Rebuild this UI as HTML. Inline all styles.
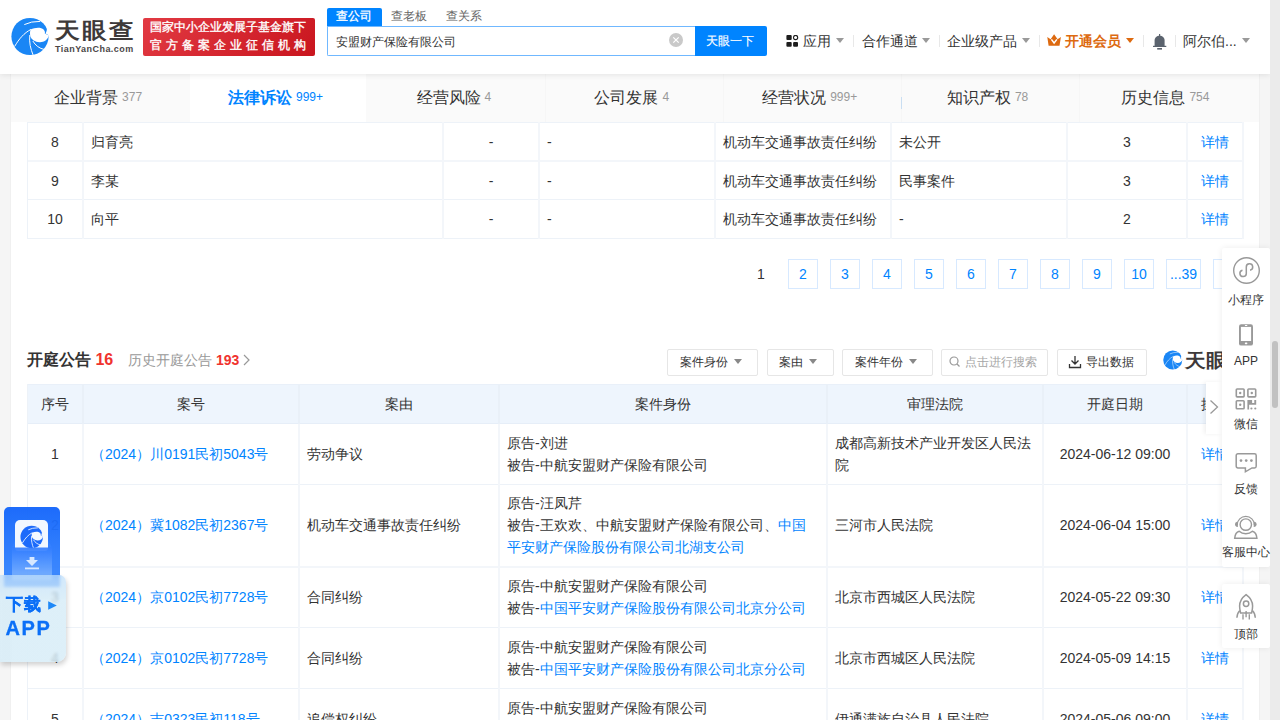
<!DOCTYPE html>
<html><head><meta charset="utf-8"><style>
*{box-sizing:border-box;margin:0;padding:0}
html,body{width:1280px;height:720px;overflow:hidden}
body{position:relative;background:#f5f5f5;font-family:"Liberation Sans",sans-serif;color:#333;font-size:14px}
.abs{position:absolute}
.t{position:absolute;white-space:nowrap;line-height:1}
#header{position:absolute;left:0;top:0;width:1270px;height:74px;background:#fff;box-shadow:0 1px 6px rgba(0,0,0,.09);z-index:5}
#scroll{position:absolute;left:1270px;top:0;width:10px;height:720px;background:#ebebeb;z-index:9}
#thumb{position:absolute;left:2px;top:341px;width:6px;height:67px;border-radius:3px;background:#c1c1c1}
#main{position:absolute;left:10px;top:74px;width:1250px;height:646px;background:#fff;border-left:1px solid #f0f0f0;border-right:1px solid #f0f0f0}
#tabs{position:absolute;left:11px;top:74px;width:1248px;height:48px;background:#fafafa;z-index:4}
.tab{position:absolute;top:0;height:48px;width:178.3px;text-align:center;font-size:16px;line-height:48px;color:#333;white-space:nowrap}
.tab small{font-size:12px;color:#999;margin-left:4px;position:relative;top:-2px}
.tab.on{background:#fff;color:#0084ff;font-weight:bold}
.tab.on small{color:#0084ff;font-weight:normal}
.hl{position:absolute;height:1px;background:#edf2f8}
.vl{position:absolute;width:1px;background:#edf2f8}
.c{position:absolute;text-align:center;white-space:nowrap;line-height:22px;font-size:14px;color:#333}
.l{position:absolute;white-space:nowrap;line-height:22px;font-size:14px;color:#333}
.blue{color:#0084ff !important}
.pg{position:absolute;top:258.5px;width:30px;height:30px;border:1px solid #d7e9ff;text-align:center;line-height:28px;color:#0084ff;font-size:14px}
.btn{position:absolute;top:348.5px;height:27.5px;border:1px solid #e6e6e6;border-radius:2px;background:#fff}
.tri{position:absolute;width:0;height:0;border-left:4px solid transparent;border-right:4px solid transparent;border-top:5px solid #999}
.side{position:absolute;left:1222px;width:48px;background:#fff;box-shadow:0 0 6px rgba(0,0,0,.08);z-index:8}
.si{position:absolute;left:1222px;width:48px;text-align:center;font-size:12px;color:#333;line-height:12px;white-space:nowrap}
</style></head><body>
<svg width="0" height="0" style="position:absolute"><defs><g id="lg">
<circle cx="21" cy="21.5" r="18.6" fill="#1a86f5"/>
<path d="M15.3 9.6Q22 6.2 31.2 6.4" fill="none" stroke="#fff" stroke-width="1"/>
<path d="M21.6 14.6C26 12.2 32 11.8 34.6 14.6C36 16.2 36.2 17.4 35.8 18.6L40 20.6C38.5 25 35 27.4 30.5 27.2C26 27 22.5 24.5 21.4 21.5C20.8 19 20.9 16.5 21.6 14.6Z" fill="#fff"/>
<path d="M37.5 11.5C38.5 13.5 37.5 17 36.5 18.6L41 21L41 10Z" fill="#fff"/>
<path d="M5.6 31.5C10 24 15 18 22 14.4" fill="none" stroke="#fff" stroke-width="1"/>
<path d="M20.8 20C20 27 21.5 34 24.3 40.5" fill="none" stroke="#fff" stroke-width="1"/>
<path d="M23.8 26C26.5 30.5 30.5 33.5 35.3 34.5" fill="none" stroke="#fff" stroke-width="1"/>
</g></defs></svg>
<svg width="0" height="0" style="position:absolute"><defs><g id="lg2">
<circle cx="21" cy="21.5" r="18.6" fill="#1466fb"/>
<path d="M15.3 9.6Q22 6.2 31.2 6.4" fill="none" stroke="#f2f8ff" stroke-width="1.4"/>
<path d="M21.6 14.6C26 12.2 32 11.8 34.6 14.6C36 16.2 36.2 17.4 35.8 18.6L40 20.6C38.5 25 35 27.4 30.5 27.2C26 27 22.5 24.5 21.4 21.5C20.8 19 20.9 16.5 21.6 14.6Z" fill="#f2f8ff"/>
<path d="M37.5 11.5C38.5 13.5 37.5 17 36.5 18.6L41 21L41 10Z" fill="#f2f8ff"/>
<path d="M5.6 31.5C10 24 15 18 22 14.4" fill="none" stroke="#f2f8ff" stroke-width="1.4"/>
<path d="M20.8 20C20 27 21.5 34 24.3 40.5" fill="none" stroke="#f2f8ff" stroke-width="1.4"/>
<path d="M23.8 26C26.5 30.5 30.5 33.5 35.3 34.5" fill="none" stroke="#f2f8ff" stroke-width="1.4"/>
</g></defs></svg>

<div id="header">
  <svg class="abs" style="left:9px;top:15px" width="43" height="43" viewBox="0 0 43 43"><use href="#lg"/></svg>
  <div class="t" style="left:55px;top:20px;font-size:22px;font-weight:bold;color:#3d3939;letter-spacing:2px;transform:scaleX(1.12);transform-origin:0 0">天眼查</div>
  <div class="t" style="left:55px;top:45px;font-size:9px;font-weight:bold;color:#4a4646;letter-spacing:0.45px">TianYanCha.com</div>
  <div class="abs" style="left:143px;top:18px;width:172px;height:38px;border-radius:2px;background:linear-gradient(135deg,#e23a43,#c9151e)"></div>
  <div class="t" style="left:150px;top:21px;font-size:12px;color:#fff;-webkit-text-stroke:0.35px #fff">国家中小企业发展子基金旗下</div>
  <div class="t" style="left:150px;top:39px;font-size:12px;color:#fff;letter-spacing:4px;-webkit-text-stroke:0.35px #fff">官方备案企业征信机构</div>

  <div class="abs" style="left:327px;top:8px;width:55px;height:18px;background:#0084ff;border-radius:2px 2px 0 0"></div>
  <div class="t" style="left:336px;top:10px;font-size:12px;color:#fff;-webkit-text-stroke:0.3px #fff">查公司</div>
  <div class="t" style="left:391px;top:10px;font-size:12px;color:#666">查老板</div>
  <div class="t" style="left:446px;top:10px;font-size:12px;color:#666">查关系</div>
  <div class="abs" style="left:327px;top:26px;width:369px;height:30px;border:1px solid #70b8ff;border-right:none;border-radius:0 0 0 2px;background:#fff"></div>
  <div class="t" style="left:336px;top:36px;font-size:12px;color:#333">安盟财产保险有限公司</div>
  
  <div class="abs" style="left:695px;top:26px;width:72px;height:30px;background:#0084ff;border-radius:0 2px 2px 0"></div>
  <div class="t" style="left:706px;top:34.5px;font-size:12px;color:#fff;-webkit-text-stroke:0.15px #fff">天眼一下</div>

  <div class="t" style="left:803px;top:34px;font-size:14px;color:#333">应用</div>
  <div class="tri" style="left:836px;top:38px"></div>
  <div class="abs" style="left:853px;top:35px;width:1px;height:12px;background:#e8e8e8"></div>
  <div class="t" style="left:862px;top:34px;font-size:14px;color:#333">合作通道</div>
  <div class="tri" style="left:922px;top:38px"></div>
  <div class="abs" style="left:939px;top:35px;width:1px;height:12px;background:#e8e8e8"></div>
  <div class="t" style="left:947px;top:34px;font-size:14px;color:#333">企业级产品</div>
  <div class="tri" style="left:1022px;top:38px"></div>
  <div class="abs" style="left:1039px;top:35px;width:1px;height:12px;background:#e8e8e8"></div>
  <div class="t" style="left:1065px;top:34px;font-size:14px;color:#dd6a10;font-weight:bold">开通会员</div>
  <div class="tri" style="left:1126px;top:38px;border-top-color:#dd6a10"></div>
  <div class="abs" style="left:1143px;top:35px;width:1px;height:12px;background:#e8e8e8"></div>
  <div class="abs" style="left:1175px;top:35px;width:1px;height:12px;background:#e8e8e8"></div>
  <div class="t" style="left:1183px;top:34px;font-size:14px;color:#333">阿尔伯...</div>
  <div class="tri" style="left:1242px;top:38px"></div>
 
  <svg class="abs" style="left:786px;top:35px" width="13" height="12" viewBox="0 0 13 12">
    <rect x="0.4" y="0" width="5.3" height="4.9" rx="1" fill="#1e1e1e"/>
    <circle cx="9.6" cy="2.5" r="2.1" fill="none" stroke="#1e1e1e" stroke-width="1.1"/>
    <rect x="0.4" y="6.9" width="5.3" height="4.9" rx="1" fill="#1e1e1e"/>
    <rect x="7.1" y="6.9" width="4.9" height="4.9" rx="1" fill="#1e1e1e"/>
  </svg>
  <svg class="abs" style="left:1047px;top:34px" width="14" height="12" viewBox="0 0 14 12">
    <path d="M0.3 3L3.6 5.2L7.1 0.2L10.6 5.2L13.9 3L12.5 11.8H1.6Z" fill="#dd6a10"/>
    <path d="M4.4 5.4L7.1 9L9.9 5.4" fill="none" stroke="#fff" stroke-width="1.5"/>
  </svg>
  <svg class="abs" style="left:1153px;top:34px" width="14" height="16" viewBox="0 0 14 16">
    <path d="M6.6 0v2.4" stroke="#5b636e" stroke-width="1.2"/>
    <path d="M1.6 12V6.5C1.6 3.6 3.8 1.8 6.6 1.8C9.4 1.8 11.6 3.6 11.6 6.5V12Z" fill="#5b636e"/>
    <rect x="0" y="11.8" width="13.3" height="1.2" fill="#5b636e"/>
    <rect x="4.2" y="14" width="4.8" height="1.6" fill="#5b636e"/>
  </svg>
  <svg class="abs" style="left:669px;top:33px" width="14" height="14" viewBox="0 0 14 14">
    <circle cx="7" cy="7" r="7" fill="#c9c9c9"/>
    <path d="M4.3 4.3l5.4 5.4M9.7 4.3l-5.4 5.4" stroke="#fff" stroke-width="1.2"/>
  </svg>
</div>

<div id="scroll"><div id="thumb"></div></div>
<div id="main"></div>
<div id="tabs">
  <div class="tab" style="left:0.0px;padding-right:4.2px">企业背景<small>377</small></div>
  <div class="tab on" style="left:179px;width:176px;padding-right:5.0px">法律诉讼<small>999+</small></div>
  <div class="tab" style="left:356.6px;padding-right:5.8px">经营风险<small>4</small></div>
  <div class="tab" style="left:534.9px;padding-right:6.6px">公司发展<small>4</small></div>
  <div class="tab" style="left:713.2px;padding-right:7.4px">经营状况<small>999+</small></div>
  <div class="tab" style="left:891.5px;padding-right:8.2px">知识产权<small>78</small></div>
  <div class="tab" style="left:1069.8px;padding-right:9.0px">历史信息<small>754</small></div>
  <div class="abs" style="left:534px;top:0;width:1px;height:48px;background:#f6f6f6"></div>
  <div class="abs" style="left:711.5px;top:0;width:1px;height:48px;background:#f6f6f6"></div>
  <div class="abs" style="left:890px;top:0;width:1px;height:48px;background:#f6f6f6"></div>
  <div class="abs" style="left:1068px;top:0;width:1px;height:48px;background:#f6f6f6"></div>
  <div class="abs" style="left:890px;top:23px;width:1px;height:11.5px;background:#c9def2"></div>
</div>

<div class="abs" style="top:122px;left:27px;width:1217px;height:1px;background:#edf2f8"></div>
<div class="abs" style="top:160px;left:27px;width:1217px;height:2px;background:#f3f6fa"></div>
<div class="abs" style="top:199px;left:27px;width:1217px;height:1px;background:#edf2f8"></div>
<div class="abs" style="top:238px;left:27px;width:1217px;height:1px;background:#edf2f8"></div>
<div class="abs" style="left:27px;top:122px;width:1px;height:117px;background:#edf2f8"></div>
<div class="abs" style="left:82px;top:122px;width:2px;height:117px;background:#f3f6fa"></div>
<div class="abs" style="left:442px;top:122px;width:2px;height:117px;background:#f3f6fa"></div>
<div class="abs" style="left:538px;top:122px;width:2px;height:117px;background:#f3f6fa"></div>
<div class="abs" style="left:714px;top:122px;width:2px;height:117px;background:#f3f6fa"></div>
<div class="abs" style="left:890px;top:122px;width:2px;height:117px;background:#f3f6fa"></div>
<div class="abs" style="left:1066px;top:122px;width:2px;height:117px;background:#f3f6fa"></div>
<div class="abs" style="left:1186px;top:122px;width:2px;height:117px;background:#f3f6fa"></div>
<div class="abs" style="left:1242px;top:122px;width:2px;height:117px;background:#f3f6fa"></div>
<div class="c" style="left:27px;width:56px;top:131px">8</div>
<div class="l" style="left:91px;top:131px">归育亮</div>
<div class="c" style="left:443px;width:96px;top:131px">-</div>
<div class="l" style="left:547px;top:131px">-</div>
<div class="l" style="left:723px;top:131px">机动车交通事故责任纠纷</div>
<div class="l" style="left:899px;top:131px">未公开</div>
<div class="c" style="left:1067px;width:120px;top:131px">3</div>
<div class="c blue" style="left:1187px;width:56px;top:131px">详情</div>
<div class="c" style="left:27px;width:56px;top:170px">9</div>
<div class="l" style="left:91px;top:170px">李某</div>
<div class="c" style="left:443px;width:96px;top:170px">-</div>
<div class="l" style="left:547px;top:170px">-</div>
<div class="l" style="left:723px;top:170px">机动车交通事故责任纠纷</div>
<div class="l" style="left:899px;top:170px">民事案件</div>
<div class="c" style="left:1067px;width:120px;top:170px">3</div>
<div class="c blue" style="left:1187px;width:56px;top:170px">详情</div>
<div class="c" style="left:27px;width:56px;top:208px">10</div>
<div class="l" style="left:91px;top:208px">向平</div>
<div class="c" style="left:443px;width:96px;top:208px">-</div>
<div class="l" style="left:547px;top:208px">-</div>
<div class="l" style="left:723px;top:208px">机动车交通事故责任纠纷</div>
<div class="l" style="left:899px;top:208px">-</div>
<div class="c" style="left:1067px;width:120px;top:208px">2</div>
<div class="c blue" style="left:1187px;width:56px;top:208px">详情</div>
<div class="c" style="left:746px;width:30px;top:262.5px">1</div>
<div class="pg" style="left:788px">2</div>
<div class="pg" style="left:830px">3</div>
<div class="pg" style="left:872px">4</div>
<div class="pg" style="left:914px">5</div>
<div class="pg" style="left:956px">6</div>
<div class="pg" style="left:998px">7</div>
<div class="pg" style="left:1040px">8</div>
<div class="pg" style="left:1082px">9</div>
<div class="pg" style="left:1124px">10</div>
<div class="pg" style="left:1166px;width:35px">...39</div>
<div class="pg" style="left:1213px">&gt;</div>
<div class="t" style="left:27px;top:352px;font-size:16px;font-weight:bold;color:#333">开庭公告 <span style="color:#f0332e">16</span></div>
<div class="t" style="left:128px;top:353px;font-size:14px;color:#999">历史开庭公告 <span style="color:#f0332e;font-weight:bold">193</span></div>
<svg class="abs" style="left:243px;top:354px" width="7" height="12" viewBox="0 0 7 12"><path d="M1 1l5 5-5 5" fill="none" stroke="#999" stroke-width="1.2"/></svg>
<div class="btn" style="left:667px;width:91px"></div>
<div class="t" style="left:680px;top:356px;font-size:12px;color:#333">案件身份</div>
<div class="tri" style="left:734px;top:359px;border-top-color:#888"></div>
<div class="btn" style="left:767px;width:67px"></div>
<div class="t" style="left:779px;top:356px;font-size:12px;color:#333">案由</div>
<div class="tri" style="left:809px;top:359px;border-top-color:#888"></div>
<div class="btn" style="left:842px;width:91px"></div>
<div class="t" style="left:855px;top:356px;font-size:12px;color:#333">案件年份</div>
<div class="tri" style="left:909px;top:359px;border-top-color:#888"></div>
<div class="btn" style="left:941px;width:107px"></div>
<svg class="abs" style="left:949px;top:356px" width="11" height="11" viewBox="0 0 11 11"><circle cx="5" cy="5" r="4" fill="none" stroke="#999" stroke-width="1.2"/><path d="M8 8l2.5 2.5" stroke="#999" stroke-width="1.2"/></svg>
<div class="t" style="left:965px;top:356px;font-size:12px;color:#a6a6a6">点击进行搜索</div>
<div class="btn" style="left:1056.5px;width:90.5px"></div>
<svg class="abs" style="left:1068px;top:355px" width="14" height="14" viewBox="0 0 14 14"><path d="M7 1v8M3.5 5.5L7 9l3.5-3.5M1.5 9v3.5h11V9" fill="none" stroke="#333" stroke-width="1.3"/></svg>
<div class="t" style="left:1086px;top:356px;font-size:12px;color:#333">导出数据</div>
<svg class="abs" style="left:1162px;top:348.7px" width="22" height="22" viewBox="0 0 43 43"><use href="#lg"/></svg>
<div class="t" style="left:1185px;top:351px;font-size:19px;font-weight:bold;color:#3d3939;transform:scaleX(1.08);transform-origin:0 0">天眼查</div>
<div class="abs" style="left:27px;top:384px;width:1216px;height:40px;background:#eef5fd"></div>
<div class="abs" style="left:27px;top:384px;width:1216px;height:1px;background:#e9f0f9"></div>
<div class="abs" style="left:27px;top:423px;width:1216px;height:1px;background:#e6eef8"></div>
<div class="abs" style="top:484px;left:27px;width:1216px;height:1px;background:#edf2f8"></div>
<div class="abs" style="top:566px;left:27px;width:1216px;height:2px;background:#f3f6fa"></div>
<div class="abs" style="top:627px;left:27px;width:1216px;height:1px;background:#edf2f8"></div>
<div class="abs" style="top:688px;left:27px;width:1216px;height:1px;background:#edf2f8"></div>
<div class="abs" style="left:27px;top:384px;width:1px;height:336px;background:#edf2f8"></div>
<div class="abs" style="left:82px;top:384px;width:2px;height:40px;background:#e9f0f8"></div>
<div class="abs" style="left:82px;top:424px;width:2px;height:296px;background:#f3f6fa"></div>
<div class="abs" style="left:298px;top:384px;width:2px;height:40px;background:#e9f0f8"></div>
<div class="abs" style="left:298px;top:424px;width:2px;height:296px;background:#f3f6fa"></div>
<div class="abs" style="left:498px;top:384px;width:2px;height:40px;background:#e9f0f8"></div>
<div class="abs" style="left:498px;top:424px;width:2px;height:296px;background:#f3f6fa"></div>
<div class="abs" style="left:826px;top:384px;width:2px;height:40px;background:#e9f0f8"></div>
<div class="abs" style="left:826px;top:424px;width:2px;height:296px;background:#f3f6fa"></div>
<div class="abs" style="left:1042px;top:384px;width:2px;height:40px;background:#e9f0f8"></div>
<div class="abs" style="left:1042px;top:424px;width:2px;height:296px;background:#f3f6fa"></div>
<div class="abs" style="left:1186px;top:384px;width:2px;height:40px;background:#e9f0f8"></div>
<div class="abs" style="left:1186px;top:424px;width:2px;height:296px;background:#f3f6fa"></div>
<div class="abs" style="left:1242px;top:384px;width:2px;height:40px;background:#e9f0f8"></div>
<div class="abs" style="left:1242px;top:424px;width:2px;height:296px;background:#f3f6fa"></div>
<div class="c" style="left:27px;width:56px;top:393px">序号</div>
<div class="c" style="left:83px;width:216px;top:393px">案号</div>
<div class="c" style="left:299px;width:200px;top:393px">案由</div>
<div class="c" style="left:499px;width:328px;top:393px">案件身份</div>
<div class="c" style="left:827px;width:216px;top:393px">审理法院</div>
<div class="c" style="left:1043px;width:144px;top:393px">开庭日期</div>
<div class="c" style="left:1187px;width:56px;top:393px">操作</div>
<div class="c" style="left:27px;width:56px;top:443.0px">1</div>
<div class="l blue" style="left:91px;top:443.0px">（2024）川0191民初5043号</div>
<div class="l" style="left:307px;top:443.0px">劳动争议</div>
<div class="l" style="left:507px;top:432.0px">原告-刘进</div>
<div class="l" style="left:507px;top:454.0px">被告-中航安盟财产保险有限公司</div>
<div class="l" style="left:835px;top:432.0px">成都高新技术产业开发区人民法</div>
<div class="l" style="left:835px;top:454.0px">院</div>
<div class="c" style="left:1043px;width:144px;top:443.0px">2024-06-12 09:00</div>
<div class="c blue" style="left:1187px;width:56px;top:443.0px">详情</div>
<div class="c" style="left:27px;width:56px;top:514.0px">2</div>
<div class="l blue" style="left:91px;top:514.0px">（2024）冀1082民初2367号</div>
<div class="l" style="left:307px;top:514.0px">机动车交通事故责任纠纷</div>
<div class="l" style="left:507px;top:492.0px">原告-汪凤芹</div>
<div class="l" style="left:507px;top:514.0px">被告-王欢欢、中航安盟财产保险有限公司、<span class="blue">中国</span></div>
<div class="l" style="left:507px;top:536.0px"><span class="blue">平安财产保险股份有限公司北湖支公司</span></div>
<div class="l" style="left:835px;top:514.0px">三河市人民法院</div>
<div class="c" style="left:1043px;width:144px;top:514.0px">2024-06-04 15:00</div>
<div class="c blue" style="left:1187px;width:56px;top:514.0px">详情</div>
<div class="c" style="left:27px;width:56px;top:585.5px">3</div>
<div class="l blue" style="left:91px;top:585.5px">（2024）京0102民初7728号</div>
<div class="l" style="left:307px;top:585.5px">合同纠纷</div>
<div class="l" style="left:507px;top:574.5px">原告-中航安盟财产保险有限公司</div>
<div class="l" style="left:507px;top:596.5px">被告-<span class="blue">中国平安财产保险股份有限公司北京分公司</span></div>
<div class="l" style="left:835px;top:585.5px">北京市西城区人民法院</div>
<div class="c" style="left:1043px;width:144px;top:585.5px">2024-05-22 09:30</div>
<div class="c blue" style="left:1187px;width:56px;top:585.5px">详情</div>
<div class="c" style="left:27px;width:56px;top:646.5px">4</div>
<div class="l blue" style="left:91px;top:646.5px">（2024）京0102民初7728号</div>
<div class="l" style="left:307px;top:646.5px">合同纠纷</div>
<div class="l" style="left:507px;top:635.5px">原告-中航安盟财产保险有限公司</div>
<div class="l" style="left:507px;top:657.5px">被告-<span class="blue">中国平安财产保险股份有限公司北京分公司</span></div>
<div class="l" style="left:835px;top:646.5px">北京市西城区人民法院</div>
<div class="c" style="left:1043px;width:144px;top:646.5px">2024-05-09 14:15</div>
<div class="c blue" style="left:1187px;width:56px;top:646.5px">详情</div>
<div class="c" style="left:27px;width:56px;top:708.0px">5</div>
<div class="l blue" style="left:91px;top:708.0px">（2024）吉0323民初118号</div>
<div class="l" style="left:307px;top:708.0px">追偿权纠纷</div>
<div class="l" style="left:507px;top:697.0px">原告-中航安盟财产保险有限公司</div>
<div class="l" style="left:507px;top:719.0px">被告-<span class="blue">中国平安财产保险股份有限公司</span></div>
<div class="l" style="left:835px;top:708.0px">伊通满族自治县人民法院</div>
<div class="c" style="left:1043px;width:144px;top:708.0px">2024-05-06 09:00</div>
<div class="c blue" style="left:1187px;width:56px;top:708.0px">详情</div>
<div class="abs" style="left:1206px;top:382px;width:16px;height:52px;background:#fff;box-shadow:-2px 0 4px rgba(0,0,0,.06);z-index:7"></div>
<svg class="abs" style="left:1209px;top:399px;z-index:7" width="10" height="16" viewBox="0 0 10 16"><path d="M1.5 1.5l7 6.5-7 6.5" fill="none" stroke="#999" stroke-width="1.3"/></svg>
<div class="side" style="top:248px;height:319px;border-radius:2px"></div>
<div class="side" style="top:584px;height:64px;border-radius:2px"></div>
<svg class="abs" style="left:1222px;top:248px;z-index:9" width="48" height="400" viewBox="1222 248 48 400" fill="none" stroke="#999">
  <circle cx="1246.5" cy="270.5" r="12.8" stroke-width="1.4"/>
  <path d="M1242.5 270.25A3.2 3.2 0 1 0 1246.3 273.4V267A3.2 3.2 0 1 1 1250.06 270.15" stroke-width="1.5"/>
  <rect x="1239" y="324.2" width="14" height="21.4" rx="2.2" fill="#999" stroke="none"/>
  <rect x="1240.9" y="326.9" width="10.2" height="14.1" fill="#fff" stroke="none"/>
  <rect x="1244.8" y="324.9" width="2.6" height="1.2" rx=".6" fill="#fff" stroke="none"/>
  <rect x="1244.8" y="342.6" width="2.6" height="1.6" rx=".8" fill="#fff" stroke="none"/>
  <rect x="1236.3" y="389" width="7.8" height="7.9" rx=".8" stroke-width="1.6"/>
  <rect x="1247.9" y="389" width="7.8" height="7.9" rx=".8" stroke-width="1.6"/>
  <rect x="1236.3" y="400.7" width="7.8" height="8" rx=".8" stroke-width="1.6"/>
  <circle cx="1240.2" cy="393" r="1.2" fill="#999" stroke="none"/>
  <circle cx="1251.8" cy="393" r="1.2" fill="#999" stroke="none"/>
  <circle cx="1240.2" cy="404.7" r="1.2" fill="#999" stroke="none"/>
  <path d="M1247.4 399.9H1252.1V403H1254.3V399.9H1256.2V404.8H1249.1V409.6H1247.4Z" fill="#999" stroke="none"/>
  <circle cx="1251.4" cy="408.5" r="1.1" fill="#999" stroke="none"/>
  <circle cx="1255.3" cy="408.5" r="1.1" fill="#999" stroke="none"/>
  <path d="M1237.9 453.8H1254.5A1.7 1.7 0 0 1 1256.2 455.5V466.2A1.7 1.7 0 0 1 1254.5 467.9H1252L1245.4 471.8V467.9H1237.9A1.7 1.7 0 0 1 1236.2 466.2V455.5A1.7 1.7 0 0 1 1237.9 453.8Z" stroke-width="1.5"/>
  <circle cx="1241" cy="460.6" r="1.35" fill="#999" stroke="none"/>
  <circle cx="1246.2" cy="460.6" r="1.35" fill="#999" stroke="none"/>
  <circle cx="1251.4" cy="460.6" r="1.35" fill="#999" stroke="none"/>
  <circle cx="1245.8" cy="524.6" r="5.7" stroke-width="1.4"/>
  <path d="M1237.2 525A8.6 8.6 0 0 1 1254.4 525" stroke-width="1.2"/>
  <path d="M1237.9 521.4C1235.6 521.8 1235 523 1235 524.2C1235 525.5 1235.6 526.6 1237.9 527Z" fill="#999" stroke="none"/>
  <path d="M1253.7 521.4C1256 521.8 1256.6 523 1256.6 524.2C1256.6 525.5 1256 526.6 1253.7 527Z" fill="#999" stroke="none"/>
  <path d="M1234.7 538.3C1235 534.6 1236.8 531.9 1239.2 531.3C1241 532.9 1243.2 533.7 1245.8 533.7C1248.4 533.7 1250.6 532.9 1252.4 531.3C1254.8 531.9 1256.6 534.6 1256.9 538.3Z" stroke-width="1.5"/>
  <path d="M1246.1 594.6C1242 597.6 1239.6 601.5 1239.6 606C1239.6 609 1240.2 611.5 1240.6 613H1251.6C1252 611.5 1252.6 609 1252.6 606C1252.6 601.5 1250.2 597.6 1246.1 594.6Z" stroke-width="1.5"/>
  <circle cx="1246.1" cy="603.8" r="2.7" stroke-width="1.5"/>
  <path d="M1239.8 610.6C1238.2 612 1237.1 614.5 1236.9 617.8M1252.4 610.6C1254 612 1255.1 614.5 1255.3 617.8" stroke-width="1.5"/>
  <path d="M1246.1 611V617.2M1243 614.2V619.4M1249.3 614.2V619.4" stroke-width="1.4"/>
</svg>
<div class="si" style="top:294px;z-index:9">小程序</div>
<div class="si" style="top:355px;z-index:9">APP</div>
<div class="si" style="top:418px;z-index:9">微信</div>
<div class="si" style="top:483px;z-index:9">反馈</div>
<div class="si" style="top:546px;z-index:9">客服中心</div>
<div class="si" style="top:628px;z-index:9">顶部</div>

<div class="abs" style="left:0;top:500px;width:70px;height:170px;z-index:7;opacity:.96">
<div class="abs" style="left:3.5px;top:7px;width:56px;height:80px;border-radius:5px 5px 0 0;background:linear-gradient(#1466fb,#3c8aff)"></div>
<svg class="abs" style="left:11px;top:40px" width="42" height="40" viewBox="0 0 42 40">
  <path d="M1 7.5L4 0.6H37.1L41 7.5Z" fill="#2d7cff"/>
</svg>
<div class="abs" style="left:15px;top:19.5px;width:33px;height:31px;border-radius:5px 5px 3px 3px;background:#f2f8ff"></div>
<svg class="abs" style="left:19px;top:24px" width="26" height="26" viewBox="0 0 43 43"><use href="#lg2"/></svg>
<svg class="abs" style="left:11px;top:40px" width="42" height="40" viewBox="0 0 42 40">
  <defs><linearGradient id="envg" x1="0" y1="0" x2="0" y2="1"><stop offset="0" stop-color="#2a78ff" stop-opacity=".92"/><stop offset="1" stop-color="#7ab3ff"/></linearGradient></defs>
  <path d="M1 7.5H41V40H1Z" fill="url(#envg)"/>
  <path d="M15 20h3.6v-3h4.8v3H27l-6 6z" fill="#d6e8ff"/>
  <rect x="14" y="27.5" width="14" height="1.8" fill="#d6e8ff"/>
</svg>
</div>
<div class="abs" style="left:0;top:575px;width:65.5px;height:87px;border-radius:0 7px 9px 0;background:linear-gradient(rgba(190,222,250,.72),rgba(214,236,247,.82) 30%);backdrop-filter:blur(1.5px);-webkit-backdrop-filter:blur(1.5px);box-shadow:1px 3px 5px rgba(0,0,0,.18);z-index:7"></div>
<div class="t" style="left:6px;top:596px;font-size:17px;font-weight:bold;color:#0b6ff7;-webkit-text-stroke:0.3px #0b6ff7;letter-spacing:1px;z-index:8">下载</div>
<svg class="abs" style="left:48px;top:601px;z-index:8" width="9" height="9" viewBox="0 0 9 9"><path d="M0.2 0.2L8.8 4.5L0.2 8.8Z" fill="#1e88f7"/></svg>
<div class="t" style="left:5.5px;top:618px;font-size:20px;font-weight:bold;color:#0b6ff7;-webkit-text-stroke:0.3px #0b6ff7;letter-spacing:1.6px;z-index:8">APP</div>

</body></html>
